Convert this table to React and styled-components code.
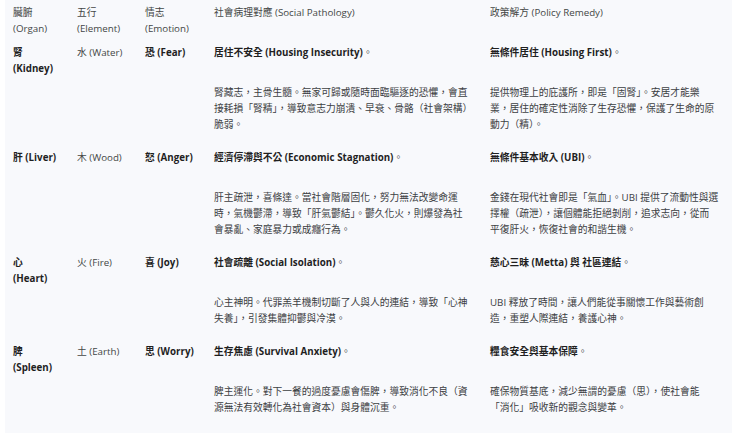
import React from 'react';
import styled, { createGlobalStyle } from 'styled-components';

const GlobalStyle = createGlobalStyle`
  html, body {
    margin: 0;
    padding: 0;
    background: #ffffff;
  }
  body {
    font-family: "Open Sans", "Noto Sans CJK TC", "Noto Sans", sans-serif;
    -webkit-font-smoothing: antialiased;
  }
`;

const COLUMNS = '64px 68px 69px 276px 1fr';

const Styled = {
  Page: styled.div`
    width: 740px;
    height: 437px;
    overflow: hidden;
    background: #ffffff;
  `,
  Table: styled.div`
    width: 727px;
    margin-left: 5px;
    padding: 5px 0 8px 8px;
    box-sizing: border-box;
    background: #f8f9fc;
    font-size: 9.75px;
    line-height: 16px;
  `,
  HeadRow: styled.div`
    display: grid;
    grid-template-columns: ${COLUMNS};
    color: #444746;
  `,
  HeadCell: styled.div`
    padding-right: 8px;
  `,
  Row: styled.div`
    display: grid;
    grid-template-columns: ${COLUMNS};
    padding: 8px 0 9px;
  `,
  Cell: styled.div`
    padding-right: 8px;
    color: ${props => (props.$muted ? '#444746' : '#1f1f1f')};
    font-weight: ${props => (props.$bold ? 700 : 400)};
  `,
  Line: styled.span`
    display: ${props => (props.$block ? 'block' : 'inline')};
  `,
  Title: styled.div`
    color: #1f1f1f;
    font-weight: 700;
    white-space: nowrap;
  `,
  Stop: styled.span`
    font-weight: 400;
    color: #444746;
  `,
  Desc: styled.div`
    margin-top: 24px;
    color: #3c4043;
  `,
  DescLine: styled.span`
    display: block;
    white-space: nowrap;
  `,
};

const rows = [
  {
    organ: '腎',
    organEn: '(Kidney)',
    stack: true,
    element: '水 (Water)',
    emotion: '恐 (Fear)',
    pathology: '居住不安全 (Housing Insecurity)',
    pathologyText: [
      '腎藏志，主骨生髓。無家可歸或隨時面臨驅逐的恐懼，會直',
      '接耗損「腎精」，導致意志力崩潰、早衰、骨骼（社會架構）',
      '脆弱。',
    ],
    remedy: '無條件居住 (Housing First)',
    remedyText: [
      '提供物理上的庇護所，即是「固腎」。安居才能樂',
      '業，居住的確定性消除了生存恐懼，保護了生命的原',
      '動力（精）。',
    ],
  },
  {
    organ: '肝',
    organEn: '(Liver)',
    stack: false,
    element: '木 (Wood)',
    emotion: '怒 (Anger)',
    pathology: '經濟停滯與不公 (Economic Stagnation)',
    pathologyText: [
      '肝主疏泄，喜條達。當社會階層固化，努力無法改變命運',
      '時，氣機鬱滯，導致「肝氣鬱結」。鬱久化火，則爆發為社',
      '會暴亂、家庭暴力或成癮行為。',
    ],
    remedy: '無條件基本收入 (UBI)',
    remedyText: [
      '金錢在現代社會即是「氣血」。UBI 提供了流動性與選',
      '擇權（疏泄），讓個體能拒絕剝削，追求志向，從而',
      '平復肝火，恢復社會的和諧生機。',
    ],
  },
  {
    organ: '心',
    organEn: '(Heart)',
    stack: true,
    element: '火 (Fire)',
    emotion: '喜 (Joy)',
    pathology: '社會疏離 (Social Isolation)',
    pathologyText: [
      '心主神明。代罪羔羊機制切斷了人與人的連結，導致「心神',
      '失養」，引發集體抑鬱與冷漠。',
    ],
    remedy: '慈心三昧 (Metta) 與 社區連結',
    remedyText: [
      'UBI 釋放了時間，讓人們能從事關懷工作與藝術創',
      '造，重塑人際連結，養護心神。',
    ],
  },
  {
    organ: '脾',
    organEn: '(Spleen)',
    stack: true,
    element: '土 (Earth)',
    emotion: '思 (Worry)',
    pathology: '生存焦慮 (Survival Anxiety)',
    pathologyText: [
      '脾主運化。對下一餐的過度憂慮會傷脾，導致消化不良（資',
      '源無法有效轉化為社會資本）與身體沉重。',
    ],
    remedy: '糧食安全與基本保障',
    remedyText: [
      '確保物質基底，減少無謂的憂慮（思），使社會能',
      '「消化」吸收新的觀念與變革。',
    ],
  },
];

function App() {
  return (
    <Styled.Page>
      <GlobalStyle />
      <Styled.Table>
        <Styled.HeadRow>
          <Styled.HeadCell>臟腑<br />(Organ)</Styled.HeadCell>
          <Styled.HeadCell>五行<br />(Element)</Styled.HeadCell>
          <Styled.HeadCell>情志<br />(Emotion)</Styled.HeadCell>
          <Styled.HeadCell>社會病理對應 (Social Pathology)</Styled.HeadCell>
          <Styled.HeadCell>政策解方 (Policy Remedy)</Styled.HeadCell>
        </Styled.HeadRow>
        {rows.map(row => (
          <Styled.Row key={row.organ}>
            <Styled.Cell $bold>
              <Styled.Line $block={row.stack}>{row.organ}</Styled.Line>
              {row.stack ? '' : ' '}
              <Styled.Line $block={row.stack}>{row.organEn}</Styled.Line>
            </Styled.Cell>
            <Styled.Cell $muted>{row.element}</Styled.Cell>
            <Styled.Cell $bold>{row.emotion}</Styled.Cell>
            <Styled.Cell>
              <Styled.Title>
                {row.pathology}
                <Styled.Stop>。</Styled.Stop>
              </Styled.Title>
              <Styled.Desc>
                {row.pathologyText.map(line => (
                  <Styled.DescLine key={line}>{line}</Styled.DescLine>
                ))}
              </Styled.Desc>
            </Styled.Cell>
            <Styled.Cell>
              <Styled.Title>
                {row.remedy}
                <Styled.Stop>。</Styled.Stop>
              </Styled.Title>
              <Styled.Desc>
                {row.remedyText.map(line => (
                  <Styled.DescLine key={line}>{line}</Styled.DescLine>
                ))}
              </Styled.Desc>
            </Styled.Cell>
          </Styled.Row>
        ))}
      </Styled.Table>
    </Styled.Page>
  );
}

export default App;
